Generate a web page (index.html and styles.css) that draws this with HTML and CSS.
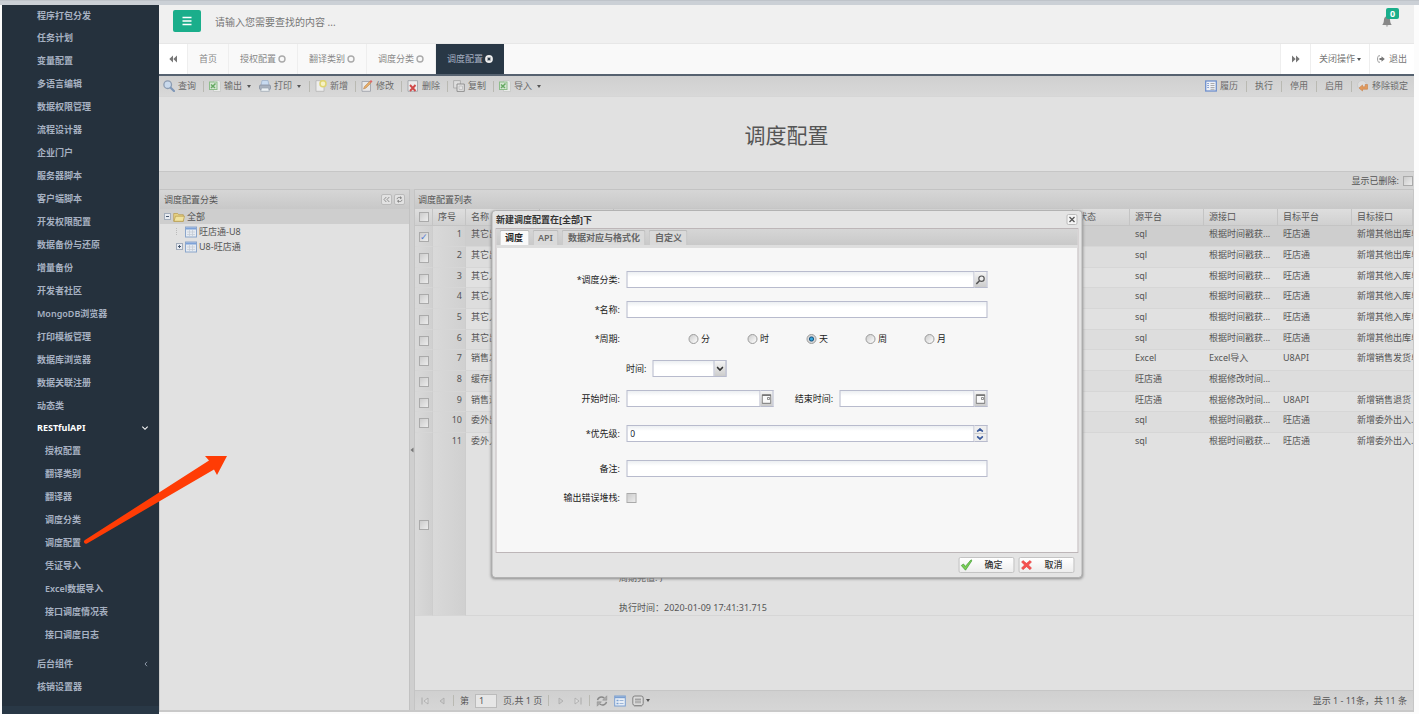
FILE: index.html
```html
<!DOCTYPE html>
<html lang="zh-CN">
<head>
<meta charset="utf-8">
<title>调度配置</title>
<link rel="stylesheet" href="styles.css">
</head>
<body>
<svg class="defs" aria-hidden="true">
  <symbol id="i-close" viewBox="0 0 8 8"><circle cx="4" cy="4" r="3" fill="none" stroke="currentColor" stroke-width="1.4"/></symbol>
  <symbol id="i-excel" viewBox="0 0 12 12"><path d="M4.500.5h5.500l1.500 1.500v9.500h-7z" fill="#e9ebe9" stroke="#c5c8c5" stroke-width=".8"/><rect x=".5" y="2" width="7.500" height="7.500" fill="#d5e6d2" stroke="#8cbd89"/><path d="M2 4.500L6 8M6.500 3.500L2 8" stroke="#66a964" stroke-width="1.500"/></symbol>
  <symbol id="i-grid" viewBox="0 0 12 12"><rect x=".5" y="1" width="11" height="10" fill="#e6ebf2" stroke="#8ba6cb"/><path d="M1 2.500h10" stroke="#7da2d8" stroke-width="2"/><path d="M2 6h8M2 8.500h8M4.500 4v6M7.500 4v6" stroke="#c0c8d2" stroke-width=".7"/></symbol>
  <symbol id="i-date" viewBox="0 0 10 10"><path d="M.7.700h8.600v8.600H.7z" fill="#fafafa" stroke="#777"/><path d="M.5 1.500h9" stroke="#777"/><path d="M6 3.500h2v2H6z" fill="none" stroke="#777" stroke-width=".8"/></symbol>
</svg>
<div class="browser-edge"></div>
<div class="app">
  <nav class="sidebar">
    <ul class="menu">
      <li><a href="#">程序打包分发</a></li>
      <li><a href="#">任务计划</a></li>
      <li><a href="#">变量配置</a></li>
      <li><a href="#">多语言编辑</a></li>
      <li><a href="#">数据权限管理</a></li>
      <li><a href="#">流程设计器</a></li>
      <li><a href="#">企业门户</a></li>
      <li><a href="#">服务器脚本</a></li>
      <li><a href="#">客户端脚本</a></li>
      <li><a href="#">开发权限配置</a></li>
      <li><a href="#">数据备份与还原</a></li>
      <li><a href="#">增量备份</a></li>
      <li><a href="#">开发者社区</a></li>
      <li><a href="#">MongoDB浏览器</a></li>
      <li><a href="#">打印模板管理</a></li>
      <li><a href="#">数据库浏览器</a></li>
      <li><a href="#">数据关联注册</a></li>
      <li><a href="#">动态类</a></li>
      <li>
        <a href="#" class="open">RESTfulAPI<svg width="8" height="8" viewBox="0 0 6 6"><path d="M1 2l2 2 2-2" fill="none" stroke="currentColor" stroke-width=".8"/></svg></a>
        <ul class="submenu">
          <li><a href="#">授权配置</a></li>
          <li><a href="#">翻译类别</a></li>
          <li><a href="#">翻译器</a></li>
          <li><a href="#">调度分类</a></li>
          <li><a href="#">调度配置</a></li>
          <li><a href="#">凭证导入</a></li>
          <li><a href="#">Excel数据导入</a></li>
          <li><a href="#">接口调度情况表</a></li>
          <li><a href="#">接口调度日志</a></li>
        </ul>
      </li>
      <li><a href="#">后台组件<svg width="6" height="6" viewBox="0 0 6 6"><path d="M4 .8L2 3l2 2.200" fill="none" stroke="currentColor" stroke-width=".8"/></svg></a></li>
      <li><a href="#">核销设置器</a></li>
    </ul>
  </nav>

  <div class="main">
    <header class="topbar">
      <button class="burger" aria-label="菜单"><svg width="10" height="10" viewBox="0 0 10 10"><path d="M.5 1.500h9M.5 5h9M.5 8.500h9" stroke="#fff" stroke-width="1.600"/></svg></button>
      <input class="search" type="text" placeholder="请输入您需要查找的内容 ..." aria-label="查找">
      <button class="bell" aria-label="通知"><svg width="10" height="11" viewBox="0 0 10 11"><path d="M5 0c-2.500.6-3 2.500-3.100 4.500C1.800 7 1 8 .2 9h9.600C9 8 8.200 7 8.100 4.500 8 2.500 7.500.6 5 0z" fill="#888"/><path d="M3.700 9.500h2.600L5 10.800z" fill="#888"/></svg><span class="badge">0</span></button>
    </header>

    <div class="tabs">
      <button class="tab roll" aria-label="向左"><svg width="8" height="8" viewBox="0 0 8 8"><path d="M4 .5v7L.3 4zM8 .5v7L4.300 4z" fill="#777"/></svg></button>
      <button class="tab">首页</button>
      <button class="tab">授权配置<svg class="x"><use href="#i-close"/></svg></button>
      <button class="tab">翻译类别<svg class="x"><use href="#i-close"/></svg></button>
      <button class="tab">调度分类<svg class="x"><use href="#i-close"/></svg></button>
      <button class="tab active">调度配置<svg class="x" viewBox="0 0 8 8"><circle cx="4" cy="4" r="3.900" fill="#eee"/><path d="M2.600 2.600l2.800 2.800M5.400 2.600L2.600 5.400" stroke="#293846" stroke-width="1.300"/></svg></button>
      <span class="fill"></span>
      <button class="tab tool roll" aria-label="向右"><svg width="8" height="8" viewBox="0 0 8 8"><path d="M0 .5v7L3.700 4zM4 .5v7L7.700 4z" fill="#777"/></svg></button>
      <button class="tab tool">关闭操作<i class="caret"></i></button>
      <button class="tab tool exit"><svg width="8" height="8" viewBox="0 0 8 8"><path d="M3 .8C1 .5.6 1.500.6 4S1 7.500 3 7.200" fill="none" stroke="#999"/><path d="M2.500 3h2V1.200L7.800 4 4.500 6.800V5h-2z" fill="#777"/></svg>退出</button>
    </div>

    <div class="toolbar">
      <button><svg class="ic" viewBox="0 0 12 12"><circle cx="4.700" cy="4.700" r="3.800" fill="#c9d9ec" stroke="#8c9cb2" stroke-width="1.300"/><path d="M7.700 7.700L11 11" stroke="#7f97b8" stroke-width="2.200" stroke-linecap="round"/></svg>查询</button>
      <i class="sep"></i>
      <button><svg class="ic"><use href="#i-excel"/></svg>输出<i class="caret"></i></button>
      <button><svg class="ic" viewBox="0 0 12 12"><path d="M3 .5h6l1 5H2z" fill="#c8daf0" stroke="#9fb2cc" stroke-width=".8"/><rect x=".5" y="5" width="11" height="4.500" rx="1.200" fill="#a8b1bf" stroke="#8791a1" stroke-width=".8"/><path d="M2.500 8h7l.8 3.300H1.700z" fill="#edf1f5" stroke="#9aa3b0" stroke-width=".7"/></svg>打印<i class="caret"></i></button>
      <i class="sep"></i>
      <button><svg class="ic" viewBox="0 0 12 12"><path d="M1 .7h8v10.600H1z" fill="#eee" stroke="#b4b4b4" stroke-width=".8"/><circle cx="8" cy="3.700" r="3" fill="#f5f1c5" stroke="#dfd470" stroke-width="1.500"/></svg>新增</button>
      <i class="sep"></i>
      <button><svg class="ic" viewBox="0 0 12 12"><path d="M1 1.500h8.500v9.800H1z" fill="#e8e8e8" stroke="#a0a4ab" stroke-width=".9"/><path d="M2.500 9l1-2.500 5-5 1.500 1.500-5 5z" fill="#e4ad68" stroke="#ba8755" stroke-width=".6"/><path d="M8.500 1.500L10 0l1.500 1.500L10 3z" fill="#dc6767"/></svg>修改</button>
      <i class="sep"></i>
      <button><svg class="ic" viewBox="0 0 12 12"><path d="M1 .7h9.500v10.600H1z" fill="#ececec" stroke="#9a9ea5" stroke-width=".8"/><path d="M3 5l5.500 6M8.500 5L3 11" stroke="#d04a4a" stroke-width="1.900"/></svg>删除</button>
      <i class="sep"></i>
      <button><svg class="ic" viewBox="0 0 12 12"><path d="M.6.600h6.800v7.400H.6z" fill="#dedede" stroke="#aaa" stroke-width=".9"/><path d="M4 4h7.300v7.400H4z" fill="#e4e4e4" stroke="#888" stroke-width=".9"/><path d="M6 6h3.500v3.500H6z" fill="none" stroke="#bbb" stroke-width=".8"/></svg>复制</button>
      <i class="sep"></i>
      <button><svg class="ic"><use href="#i-excel"/></svg>导入<i class="caret"></i></button>
      <span class="fill"></span>
      <button><svg class="ic" viewBox="0 0 12 12"><rect x=".7" y="1" width="10.600" height="10" fill="#eef1f7" stroke="#6f90cc" stroke-width="1.300"/><path d="M2.300 3.500h1.500M2.300 5.500h1.500M2.300 7.500h1.500" stroke="#6f90cc"/><path d="M5.500 3.500h4M5.500 5.500h4M5.500 7.500h4M5.500 9.300h4" stroke="#999" stroke-width=".8"/></svg>履历</button>
      <i class="sep"></i>
      <button>执行</button>
      <i class="sep"></i>
      <button>停用</button>
      <i class="sep"></i>
      <button>启用</button>
      <i class="sep"></i>
      <button class="unlock"><svg class="ic" viewBox="0 0 12 12"><circle cx="5" cy="5" r="4.500" fill="#ddd" stroke="#c4c4c4" stroke-width=".6"/><path d="M2 8l3.500-3v1.800h2.700V4.500h2.300v4.700h-5V11z" fill="#e29a5c" stroke="#c9824a" stroke-width=".6"/></svg>移除锁定</button>
    </div>

    <h1 class="title">调度配置</h1>
    <div class="options"><label for="show-deleted">显示已删除:</label><input type="checkbox" id="show-deleted"></div>

    <div class="panes">
      <section class="tree-pane">
        <div class="pane-head">调度配置分类<span class="fill"></span>
          <button class="mini" aria-label="收起"><svg width="7" height="7" viewBox="0 0 7 7"><path d="M3.300 1L1 3.500 3.300 6M6.300 1L4 3.500 6.300 6" fill="none" stroke="#888" stroke-width=".9"/></svg></button>
          <button class="mini" aria-label="刷新"><svg width="7" height="7" viewBox="0 0 7 7"><path d="M1 3.200C1.200 1.500 3 1 4.500 1.800M6 3.800C5.800 5.500 4 6 2.500 5.200" fill="none" stroke="#888"/><path d="M4 0l2.200 2L4 3.200zM3 7L.8 5 3 3.800z" fill="#888"/></svg></button>
        </div>
        <ul class="tree">
          <li class="root"><svg class="node" viewBox="0 0 7 7"><rect x=".5" y=".5" width="6" height="6" fill="#e7ebf1" stroke="#a3adbb"/><path d="M2 3.500h3" stroke="#46566e"/></svg><svg class="ic" viewBox="0 0 12 12"><path d="M.7 2.500h4l1 1.200h4.600v6.600H.7z" fill="#e6d183" stroke="#b6994c" stroke-width=".7"/><path d="M2.500 5.200h9l-1.300 5.100H1z" fill="#f0e29e" stroke="#b6994c" stroke-width=".7"/></svg>全部</li>
          <li class="child"><span class="node dots"></span><svg class="ic"><use href="#i-grid"/></svg>旺店通-U8</li>
          <li class="child"><svg class="node" viewBox="0 0 7 7"><rect x=".5" y=".5" width="6" height="6" fill="#e7ebf1" stroke="#a3adbb"/><path d="M2 3.500h3M3.500 2v3" stroke="#46566e"/></svg><svg class="ic"><use href="#i-grid"/></svg>U8-旺店通</li>
        </ul>
      </section>
      <div class="splitter"><svg width="4" height="6" viewBox="0 0 4 6"><path d="M3.500.5v5L.5 3z" fill="#777"/></svg></div>
      <section class="list-pane">
        <div class="pane-head">调度配置列表</div>
        <div class="grid">
          <table>
            <colgroup><col class="c-check"><col class="c-num"><col class="c-std"><col class="c-std"><col><col class="c-state"><col class="c-std"><col class="c-std"><col class="c-std"><col class="c-last"></colgroup>
            <thead><tr><th><input type="checkbox" aria-label="全选"></th><th>序号</th><th>名称</th><th></th><th></th><th>状态</th><th>源平台</th><th>源接口</th><th>目标平台</th><th>目标接口</th></tr></thead>
            <tbody>
              <tr class="sel"><td><input type="checkbox" checked aria-label="1"></td><td>1</td><td>其它出库</td><td></td><td></td><td></td><td>sql</td><td>根据时间戳获...</td><td>旺店通</td><td>新增其他出库单</td></tr>
              <tr><td><input type="checkbox" aria-label="2"></td><td>2</td><td>其它出库</td><td></td><td></td><td></td><td>sql</td><td>根据时间戳获...</td><td>旺店通</td><td>新增其他出库单</td></tr>
              <tr><td><input type="checkbox" aria-label="3"></td><td>3</td><td>其它入库</td><td></td><td></td><td></td><td>sql</td><td>根据时间戳获...</td><td>旺店通</td><td>新增其他入库单</td></tr>
              <tr><td><input type="checkbox" aria-label="4"></td><td>4</td><td>其它入库</td><td></td><td></td><td></td><td>sql</td><td>根据时间戳获...</td><td>旺店通</td><td>新增其他入库单</td></tr>
              <tr><td><input type="checkbox" aria-label="5"></td><td>5</td><td>其它入库</td><td></td><td></td><td></td><td>sql</td><td>根据时间戳获...</td><td>旺店通</td><td>新增其他入库单</td></tr>
              <tr><td><input type="checkbox" aria-label="6"></td><td>6</td><td>其它出库</td><td></td><td></td><td></td><td>sql</td><td>根据时间戳获...</td><td>旺店通</td><td>新增其他出库单</td></tr>
              <tr><td><input type="checkbox" aria-label="7"></td><td>7</td><td>销售发货</td><td></td><td></td><td></td><td>Excel</td><td>Excel导入</td><td>U8API</td><td>新增销售发货单</td></tr>
              <tr><td><input type="checkbox" aria-label="8"></td><td>8</td><td>缓存时间</td><td></td><td></td><td></td><td>旺店通</td><td>根据修改时间...</td><td></td><td></td></tr>
              <tr><td><input type="checkbox" aria-label="9"></td><td>9</td><td>销售退货</td><td></td><td></td><td></td><td>旺店通</td><td>根据修改时间...</td><td>U8API</td><td>新增销售退货</td></tr>
              <tr><td><input type="checkbox" aria-label="10"></td><td>10</td><td>委外出库</td><td></td><td></td><td></td><td>sql</td><td>根据时间戳获...</td><td>旺店通</td><td>新增委外出入...</td></tr>
              <tr class="tall"><td><input type="checkbox" aria-label="11"></td><td>11</td><td>委外入库</td><td></td><td class="log">周期完值: }<br><br>执行时间：2020-01-09 17:41:31.715</td><td></td><td>sql</td><td>根据时间戳获...</td><td>旺店通</td><td>新增委外出入...</td></tr>
            </tbody>
          </table>
        </div>
        <footer class="pager">
          <button aria-label="首页"><svg width="8" height="8" viewBox="0 0 8 8"><path d="M1 .5v7" stroke="#aaa"/><path d="M7 1v6L3 4z" fill="#ddd" stroke="#aaa" stroke-width=".8"/></svg></button>
          <button aria-label="上一页"><svg width="8" height="8" viewBox="0 0 8 8"><path d="M6 1v6L2 4z" fill="#ccc" stroke="#aaa" stroke-width=".8"/></svg></button>
          <i class="sep"></i>
          <label for="page">第</label><input id="page" type="text" value="1"><span>页,共 1 页</span>
          <i class="sep"></i>
          <button aria-label="下一页"><svg width="8" height="8" viewBox="0 0 8 8"><path d="M2 1v6l4-3z" fill="#ccc" stroke="#aaa" stroke-width=".8"/></svg></button>
          <button aria-label="末页"><svg width="8" height="8" viewBox="0 0 8 8"><path d="M7 .5v7" stroke="#aaa"/><path d="M1 1v6l4-3z" fill="#ddd" stroke="#aaa" stroke-width=".8"/></svg></button>
          <i class="sep"></i>
          <button aria-label="刷新"><svg class="ic" viewBox="0 0 12 12"><path d="M1.500 5.200C2 2.200 5.500 1 8.300 3M10.500 6.800C10 9.800 6.500 11 3.700 9" fill="none" stroke="#888" stroke-width="1.500"/><path d="M10.800.8v4.400H6.600zM1.200 11.200V6.800h4.200z" fill="#aaa" stroke="#888" stroke-width=".5"/></svg></button>
          <button aria-label="视图"><svg class="ic" viewBox="0 0 12 12"><rect x=".7" y="1" width="10.600" height="10" fill="#e8eef6" stroke="#7b9fd0"/><path d="M1 2.300h10" stroke="#7b9fd0" stroke-width="1.800"/><path d="M2.500 5.500h2M2.500 8.500h2" stroke="#7b9fd0" stroke-width="1.400"/><path d="M5.500 5.500h4M5.500 8.500h4" stroke="#9db6d8"/></svg></button>
          <button aria-label="更多"><svg class="ic" viewBox="0 0 12 12"><rect x=".8" y="1" width="10.400" height="9.500" rx="2" fill="#dadada" stroke="#777" stroke-width=".9"/><path d="M2 11h8" stroke="#999"/><path d="M4 3v5.500M6 3v5.500M8 3v5.500M3 4.500h6M3 7h6" stroke="#999" stroke-width=".8"/></svg><i class="caret"></i></button>
          <span class="fill"></span><span>显示 1 - 11条，共 11 条</span>
        </footer>
      </section>
    </div>

    <div class="dialog" role="dialog" aria-label="新建调度配置">
      <div class="dlg-head">新建调度配置在[全部]下<span class="fill"></span><button class="mini" aria-label="关闭"><svg width="7" height="7" viewBox="0 0 7 7"><path d="M1 1l5 5M6 1L1 6" stroke="#555" stroke-width="1.300"/></svg></button></div>
      <div class="dlg-body">
        <div class="dlg-tabs"><button class="on">调度</button><button>API</button><button>数据对应与格式化</button><button>自定义</button></div>
        <form>
          <div class="row"><label class="lab" for="cat">*调度分类:</label><div class="field"><input id="cat" type="text"><button type="button" class="trig" aria-label="查找"><svg width="10" height="10" viewBox="0 0 10 10"><circle cx="6" cy="3.700" r="2.700" fill="#eee" stroke="#555" stroke-width="1.200"/><path d="M4 5.700L.8 9" stroke="#555" stroke-width="1.600"/></svg></button></div></div>
          <div class="row"><label class="lab" for="nm">*名称:</label><div class="field"><input id="nm" type="text"></div></div>
          <div class="row period"><span class="lab">*周期:</span><div class="field radios">
            <label><input type="radio" name="p">分</label><label><input type="radio" name="p">时</label><label><input type="radio" name="p" checked>天</label><label><input type="radio" name="p">周</label><label><input type="radio" name="p">月</label></div></div>
          <div class="row"><span class="lab"></span><label for="tm">时间:</label><div class="combo"><select id="tm"><option></option></select><span class="trig"><svg width="7" height="6" viewBox="0 0 7 6"><path d="M.5 1l3 3 3-3" fill="none" stroke="#333" stroke-width="1.700"/></svg></span></div></div>
          <div class="row loose"><label class="lab" for="st">开始时间:</label><div class="field"><input id="st" type="text"><button type="button" class="trig" aria-label="选择开始时间"><svg width="10" height="10"><use href="#i-date"/></svg></button></div><label class="mid" for="et">结束时间:</label><div class="field"><input id="et" type="text"><button type="button" class="trig" aria-label="选择结束时间"><svg width="10" height="10"><use href="#i-date"/></svg></button></div></div>
          <div class="row loose"><label class="lab" for="pr">*优先级:</label><div class="field"><input id="pr" type="text" value="0"><span class="spin"><button type="button" aria-label="增加"><svg width="7" height="4" viewBox="0 0 7 4"><path d="M.6 3.600l2.900-2.600 2.900 2.600" fill="none" stroke="#3a5a9c" stroke-width="1.700"/></svg></button><button type="button" aria-label="减少"><svg width="7" height="4" viewBox="0 0 7 4"><path d="M.6.400L3.500 3 6.400.4" fill="none" stroke="#3a5a9c" stroke-width="1.700"/></svg></button></span></div></div>
          <div class="row"><label class="lab" for="rm">备注:</label><div class="field"><input id="rm" type="text"></div></div>
          <div class="row"><label class="lab" for="er">输出错误堆栈:</label><input type="checkbox" id="er"></div>
        </form>
      </div>
      <div class="dlg-foot">
        <button><svg class="ic" viewBox="0 0 12 12"><path d="M.8 6.500L3 5l1.800 2.500L10.500.8l1 .7L5 11.200z" fill="#7ccf55" stroke="#3f9a35" stroke-width=".7"/></svg><span>确定</span></button>
        <button><svg class="ic" viewBox="0 0 12 12"><path d="M2.500 1.500L6 4.300l3.500-2.800L11 3 8 6l3 3-1.500 1.700L6 7.700l-3.500 3L1 9l3-3-3-3z" fill="#f5504f" stroke="#de3b3b" stroke-width=".5"/></svg><span>取消</span></button>
      </div>
    </div>
  </div>
  <svg class="arrow" width="146" height="92" viewBox="0 0 146 92"><path d="M3 86L127 6.500L123 2L145 2L135 21L132 15.500L5 89.500A2 2 0 0 1 3 86z" fill="#ff3c05"/></svg>
</div>
</body>
</html>
```
FILE: styles.css
```css
* { box-sizing: border-box; }
body {
  margin: 0;
  min-height: 100vh;
  display: flex;
  flex-direction: column;
  background: #fcfcfc;
  font: 9px/12px "Noto Sans", "Noto Sans CJK SC", sans-serif;
  color: #555;
}
.defs { position: absolute; width: 0; height: 0; }
button, input, select { font: inherit; color: inherit; }
button { border: 0; background: none; padding: 0; display: flex; align-items: center; white-space: nowrap; }
ul { list-style: none; margin: 0; padding: 0; }
a { color: inherit; text-decoration: none; }
svg { flex: none; }
.fill { flex: 1; }
.ic { width: 12px; height: 12px; }
.caret { border: 2px solid transparent; border-top: 3px solid #555; border-bottom: 0; }

.browser-edge { height: 5px; background: #cbd0d6; border-top: 1px solid #bfc4ca; }
.app { position: relative; flex: 1; display: flex; padding: 0 5px 0 2px; }

.sidebar { width: 157px; background: #25313d; border-bottom: 8px solid #293846; color: #a7b1c2; font-weight: 600; }
.menu > li > a { display: flex; align-items: center; justify-content: space-between; height: 23px; padding: 0 10px 0 35px; }
.menu > li:first-child > a { height: 21px; }
.menu > li > a.open { height: 22px; color: #fff; font-weight: 700; }
.submenu { padding-bottom: 6px; }
.submenu a { display: flex; align-items: center; height: 23px; padding-left: 43px; }

.main { position: relative; flex: 1; min-width: 0; display: flex; flex-direction: column; margin-bottom: 2px; background: #e1e1e1; }
.topbar { display: flex; align-items: flex-start; height: 39px; padding: 5px 14px; background: #f0f0f0; border-bottom: 1px solid #e7e7e7; }
.burger { width: 28px; height: 22px; justify-content: center; background: #1aae8b; border-radius: 2px; }
.search { flex: 1; height: 24px; margin-left: 14px; padding: 0; border: 0; background: none; font-size: 10px; color: #777; }
.search::placeholder { color: #777; opacity: 1; }
.bell { position: relative; width: 18px; height: 17px; align-items: flex-end; }
.badge { position: absolute; left: 4px; top: -2px; width: 13px; height: 11px; border-radius: 2px; background: #1aae8b; color: #fff; font-weight: 700; line-height: 11px; text-align: center; }

.tabs { display: flex; height: 32px; background: #f9f9f9; border-bottom: 2px solid #566270; color: #888; }
.tab { padding: 0 11px; border-right: 1px solid #eee; }
.tab .x { width: 8px; height: 8px; margin-left: 2px; color: #aaa; }
.tab.active { background: #293846; color: #a7b1c2; border: 0; }
.tab.roll { padding: 0 10px; background: #fff; }
.tab.tool { background: #fff; border: 0; border-left: 1px solid #eee; padding: 0 8px; color: #777; }
.tab.tool.roll { padding: 0 10px 0 11px; }
.tab.tool .caret { margin-left: 2px; }
.tab.exit { gap: 4px; padding: 0 7px; }

.toolbar { display: flex; align-items: center; height: 20px; padding: 0 6px 0 4px; background: linear-gradient(#d0d0d0, #d8d8d8); color: #6b6b6b; }
.toolbar button, .dlg-foot button { gap: 3px; }
.toolbar .caret { margin: 0 8px 0 2px; }
.sep { width: 1px; height: 11px; background: #b9b9b2; }
.toolbar .sep { margin: 0 5px 0 7px; }
.toolbar button:has(.caret) + .sep { margin-left: 0; }
.toolbar .fill ~ .sep { margin: 0 8px; }
.toolbar .fill ~ .sep:has(+ .unlock) { margin-right: 5px; }

.title { margin: 0; padding: 26px 0 24px; border-top: 1px solid #d6d6d6; border-bottom: 1px solid #c6c6c6; font-size: 21px; line-height: 24px; font-weight: 400; text-align: center; }
.options { display: flex; align-items: center; justify-content: flex-end; gap: 4px; height: 17px; background: #d4d4d4; padding-right: 1px; }
input[type=checkbox] { appearance: none; flex: none; display: block; width: 10px; height: 10px; margin: 0; border: 1px solid #aaa; background: linear-gradient(135deg, #ccc, #ececec); }
input[type=checkbox]:checked::before { content: "✓"; display: block; color: #527bd0; font: 700 9px/8px "DejaVu Sans", sans-serif; }

.panes { flex: 1; display: flex; border-bottom: 2px solid #c9c9c9; border-right: 1px solid #c6c6c6; }
.pane-head { display: flex; align-items: center; gap: 2px; height: 20px; padding: 0 4px; border-top: 1px solid #c3c3c3; background: linear-gradient(#d6d6d6, #c8c8c8); }
.mini { width: 11px; height: 11px; justify-content: center; border: 1px solid #bbb; border-radius: 2px; background: #e2e2e2; }
.tree-pane { width: 250px; border-left: 1px solid #ccc; }
.tree li { display: flex; align-items: center; height: 15px; gap: 2px; padding-left: 4px; }
.tree .root { background: #cecece; }
.tree .child { padding-left: 16px; }
.node { width: 7px; height: 7px; }
.dots { border-left: 1px dotted #bbb; }
.splitter { width: 5px; display: flex; align-items: center; background: #cfcfcf; border-left: 1px solid #c2c2c2; }
.list-pane { flex: 1; min-width: 0; display: flex; flex-direction: column; border-left: 1px solid #c4c4c4; }
.list-pane .pane-head { padding: 0 3px; }
.grid { flex: 1; overflow: hidden; }
table { width: 100%; table-layout: fixed; border-collapse: separate; border-spacing: 0; }
.c-check { width: 18px; }
.c-num { width: 33px; }
.c-std { width: 74px; }
.c-state { width: 57px; }
.c-last { width: 61px; }
th { height: 17px; padding: 0 5px; background: linear-gradient(#dedede, #d0d0d0); border-right: 1px solid #c4c4c4; border-bottom: 1px solid #c4c4c4; font-weight: 400; text-align: left; white-space: nowrap; }
td { height: 21px; padding: 2px 5px; border-bottom: 1px solid #d6d6d6; vertical-align: top; white-space: nowrap; overflow: hidden; }
tbody tr:nth-child(3n) td { height: 20px; }
tbody tr:nth-child(even) { background: #dddddd; }
tbody tr.sel { background: #cecece; }
th:first-child, td:first-child { padding: 0 4px; vertical-align: middle; }
td:first-child { padding-top: 2px; }
td:nth-child(-n+2) { border-right: 1px solid #cdcdcd; background: linear-gradient(90deg, #d9d9d9, #d0d0d0); }
td:nth-child(2) { text-align: right; padding-right: 3px; }
tr.tall { background: none; }
tbody tr.tall td { height: 183px; }
tbody tr.tall .log { vertical-align: bottom; line-height: 15px; padding-bottom: 0; }

.pager { display: flex; align-items: center; gap: 6px; height: 20px; padding: 0 6px 0 4px; background: linear-gradient(#d0d0d0, #d6d6d6); border-top: 1px solid #c6c6c6; }
.pager button { min-width: 11px; justify-content: center; }
.pager input { width: 22px; height: 14px; padding: 0 3px; border: 1px solid #bbb; background: #e6e6e6; }
.pager .caret { margin-left: 2px; }

.dialog { position: absolute; top: 205px; left: 50%; width: 591px; transform: translateX(-50%); padding: 0 3px; background: #e4e4e4; border: 1px solid #b2b2b2; border-radius: 4px; box-shadow: 0 1px 3px #888; }
.dlg-head { display: flex; align-items: center; height: 17px; padding: 0 1px; font-weight: 700; color: #333; }
.dlg-head .mini { background: #f5f5f5; }
.dlg-body { border: 1px solid #bdb6b8; background: #f7f7f7; color: #222; }
.dlg-tabs { display: flex; align-items: flex-end; gap: 3px; height: 19px; padding: 0 3px 3px; background: linear-gradient(#d6d6d6, #c9c9c9 16px, #dedede 16px); }
.dlg-tabs button { height: 15px; padding: 0 5px; border: 1px solid #bbb; border-bottom: 0; border-radius: 2px 2px 0 0; background: #dadada; color: #666; font-weight: 600; }
.dlg-tabs .on { background: #f9f9f9; color: #222; }
form { padding: 23px 90px 33px 0; }
.row { display: flex; align-items: center; height: 17px; margin-bottom: 13px; }
.row.period { height: 16px; }
.row.loose { margin-bottom: 18px; }
.row:last-child { height: 16px; }
.lab { width: 124px; margin-right: 6px; text-align: right; }
.field { flex: 1; display: flex; height: 17px; min-width: 0; }
.field input[type=text], .combo select { flex: 1; min-width: 0; height: 17px; padding: 0 3px; border: 1px solid #b8bbcd; border-radius: 0; background: linear-gradient(#eceff2, #fff 5px); }
.trig { width: 13px; height: 17px; display: flex; align-items: center; justify-content: center; border: 1px solid #b8bbcd; border-left: 0; background: linear-gradient(#f4f4f4, #ccc); }
.mid { margin: 0 6px 0 21px; }
.radios { padding-left: 62px; }
.radios label { display: flex; align-items: center; gap: 3px; width: 59px; }
.radios input { appearance: none; width: 10px; height: 10px; margin: 0; border: 1px solid #999; border-radius: 50%; background: linear-gradient(135deg, #ccc, #fff); }
.radios input:checked { background: radial-gradient(circle, #36a9e0 1px, #15527f 2px, #d8d8d8 3px); }
.combo { position: relative; display: flex; width: 74px; margin-left: 6px; }
.combo select { appearance: none; }
.combo .trig { position: absolute; right: 0; top: 0; pointer-events: none; border-left: 1px solid #b8bbcd; }
.spin { display: flex; flex-direction: column; width: 13px; border: 1px solid #b8bbcd; border-left: 0; background: #eee; }
.spin button { flex: 1; justify-content: center; }
.spin button + button { border-top: 1px solid #ccc; }
.dlg-foot { display: flex; justify-content: flex-end; gap: 4px; padding: 4px; }
.dlg-foot button { width: 56px; height: 16px; padding: 0 1px; border: 1px solid #c4c4c4; border-radius: 2px; background: linear-gradient(#fff, #ededed); color: #333; font-weight: 500; }
.dlg-foot span { flex: 1; text-align: center; }
.arrow { position: absolute; left: 82px; top: 449px; pointer-events: none; }
```
